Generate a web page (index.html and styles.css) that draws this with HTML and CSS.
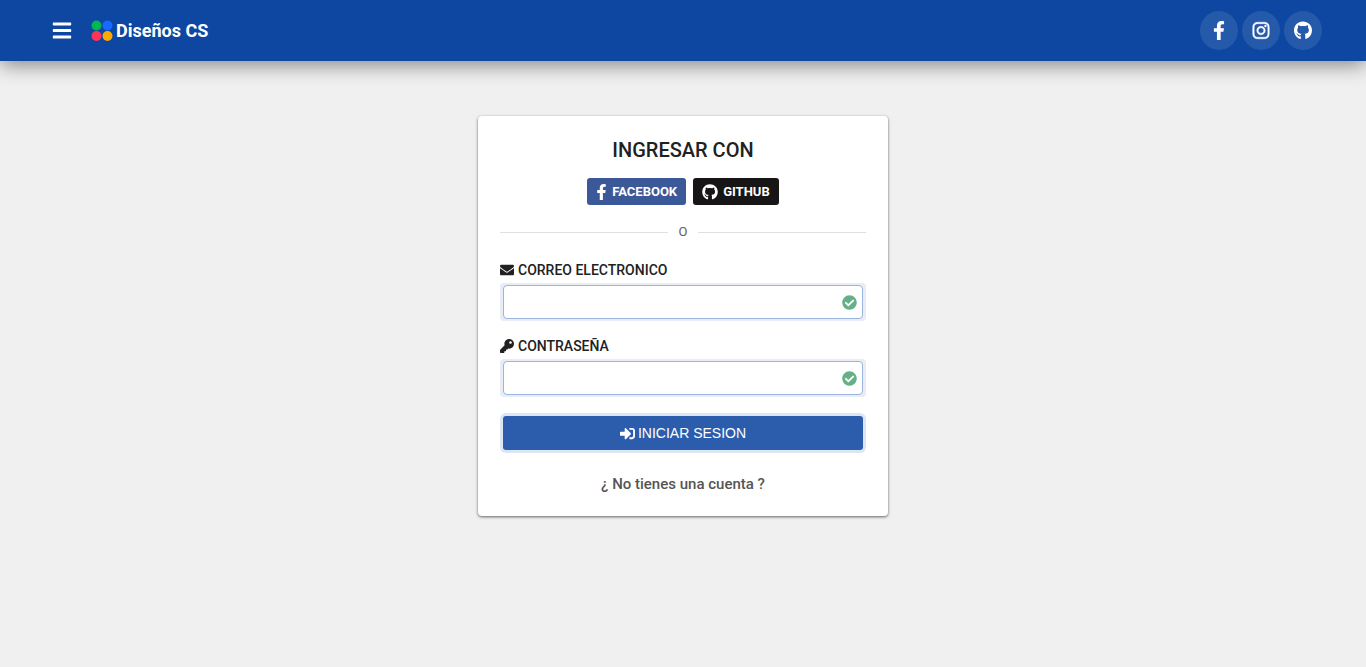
FILE: index.html
```html
<!DOCTYPE html>
<html lang="es">
<head>
<meta charset="utf-8">
<meta name="viewport" content="width=device-width, initial-scale=1">
<title>Diseños CS</title>
<link rel="stylesheet" href="styles.css">
</head>
<body>
<svg class="sprite" aria-hidden="true">
  <symbol id="facebook" viewBox="0 0 320 512"><path d="M279.14 288l14.22-92.66h-88.91v-60.13c0-25.35 12.42-50.06 52.24-50.06h40.42V6.26S260.43 0 225.36 0c-73.22 0-121.08 44.38-121.08 124.72v70.62H22.89V288h81.39v224h100.17V288z"/></symbol>
  <symbol id="github" viewBox="0 0 496 512"><path d="M165.900 397.400c0 2-2.300 3.600-5.200 3.600-3.300.3-5.600-1.300-5.600-3.600 0-2 2.300-3.600 5.200-3.600 3-.3 5.600 1.300 5.600 3.600zM244.800 8C106.100 8 0 113.300 0 252c0 110.900 69.800 205.800 169.500 239.200 12.800 2.300 17.300-5.600 17.300-12.100 0-6.200-.3-40.400-.3-61.400 0 0-70 15-84.700-29.800 0 0-11.400-29.100-27.800-36.600 0 0-22.900-15.700 1.600-15.400 0 0 24.900 2 38.600 25.800 21.900 38.600 58.600 27.500 72.900 20.900 2.300-16 8.800-27.100 16-33.700-55.900-6.200-112.300-14.300-112.300-110.500 0-27.500 7.600-41.300 23.600-58.900-2.600-6.500-11.100-33.300 2.600-67.900 20.900-6.500 69 27 69 27 20-5.600 41.500-8.500 62.800-8.500s42.800 2.900 62.800 8.500c0 0 48.100-33.600 69-27 13.700 34.700 5.200 61.400 2.600 67.900 16 17.700 25.800 31.500 25.800 58.900 0 96.500-58.900 104.200-114.800 110.500 9.200 7.900 17 22.900 17 46.400 0 33.700-.3 75.400-.3 83.600 0 6.500 4.600 14.400 17.300 12.100C428.200 457.800 496 362.900 496 252 496 113.300 383.500 8 244.800 8z"/></symbol>
</svg>

<header class="navbar">
  <div class="navbar-start">
    <button class="menu" type="button" aria-label="Menú">
      <svg class="icon-menu" viewBox="0 0 448 512"><path d="M16 132h416c8.837 0 16-7.163 16-16V76c0-8.837-7.163-16-16-16H16C7.163 60 0 67.163 0 76v40c0 8.837 7.163 16 16 16zm0 160h416c8.837 0 16-7.163 16-16v-40c0-8.837-7.163-16-16-16H16c-8.837 0-16 7.163-16 16v40c0 8.837 7.163 16 16 16zm0 160h416c8.837 0 16-7.163 16-16v-40c0-8.837-7.163-16-16-16H16c-8.837 0-16 7.163-16 16v40c0 8.837 7.163 16 16 16z"/></svg>
    </button>
    <a class="brand" href="#">
      <svg class="brand-logo" viewBox="0 0 22 22"><circle cx="5.500" cy="5.500" r="5" fill="#00b84f"/><circle cx="16.500" cy="5.500" r="5" fill="#1769ff"/><circle cx="5.500" cy="16" r="5" fill="#ff3358"/><circle cx="16.500" cy="16" r="5" fill="#ffa900"/></svg>
      <span>Diseños CS</span>
    </a>
  </div>
  <nav class="social" aria-label="Redes sociales">
    <a class="social-link" href="#" aria-label="Facebook"><svg class="icon-social"><use href="#facebook"/></svg></a>
    <a class="social-link" href="#" aria-label="Instagram"><svg class="icon-social icon-instagram" viewBox="0 0 448 512"><path d="M224.100 141c-63.600 0-114.900 51.300-114.900 114.900s51.300 114.900 114.900 114.900S339 319.500 339 255.900 287.700 141 224.100 141zm0 189.600c-41.100 0-74.700-33.500-74.700-74.700s33.500-74.700 74.700-74.700 74.700 33.500 74.700 74.700-33.600 74.700-74.700 74.700zm146.400-194.300c0 14.900-12 26.800-26.800 26.800-14.900 0-26.800-12-26.800-26.800s12-26.800 26.800-26.800 26.800 12 26.800 26.800zm76.100 27.200c-1.700-35.900-9.900-67.700-36.200-93.900-26.200-26.200-58-34.400-93.900-36.200-37-2.100-147.900-2.100-184.900 0-35.800 1.700-67.600 9.900-93.900 36.100s-34.400 58-36.200 93.900c-2.100 37-2.100 147.900 0 184.900 1.700 35.900 9.900 67.700 36.200 93.900s58 34.400 93.900 36.200c37 2.100 147.900 2.100 184.900 0 35.900-1.700 67.700-9.900 93.900-36.200 26.200-26.200 34.400-58 36.200-93.900 2.100-37 2.100-147.800 0-184.800zM398.800 388c-7.800 19.600-22.900 34.700-42.600 42.600-29.500 11.700-99.500 9-132.100 9s-102.700 2.600-132.100-9c-19.600-7.800-34.700-22.900-42.600-42.600-11.700-29.500-9-99.500-9-132.100s-2.600-102.700 9-132.100c7.800-19.600 22.900-34.700 42.600-42.600 29.500-11.700 99.500-9 132.100-9s102.700-2.600 132.100 9c19.600 7.800 34.700 22.900 42.600 42.600 11.700 29.500 9 99.500 9 132.100s2.700 102.700-9 132.100z"/></svg></a>
    <a class="social-link" href="#" aria-label="GitHub"><svg class="icon-social"><use href="#github"/></svg></a>
  </nav>
</header>

<main class="page">
  <form class="card">
    <h1 class="title">INGRESAR CON</h1>
    <div class="providers">
      <button class="provider facebook" type="button"><svg class="icon-provider narrow"><use href="#facebook"/></svg>FACEBOOK</button>
      <button class="provider github" type="button"><svg class="icon-provider"><use href="#github"/></svg>GITHUB</button>
    </div>
    <div class="divider">O</div>
    <div class="field">
      <label class="label" for="email"><svg class="icon-label" viewBox="0 0 512 512"><path d="M502.300 190.800c3.900-3.100 9.700-.2 9.700 4.700V400c0 26.500-21.500 48-48 48H48c-26.500 0-48-21.500-48-48V195.600c0-5 5.700-7.800 9.700-4.700 22.400 17.400 52.100 39.500 154.100 113.600 21.100 15.400 56.700 47.800 92.200 47.600 35.700.3 72-32.800 92.300-47.600 102-74.100 131.600-96.300 154-113.700zM256 320c23.200.4 56.600-29.200 73.400-41.400 132.700-96.300 142.800-104.700 173.400-128.700 5.800-4.500 9.200-11.500 9.200-18.900v-19c0-26.500-21.500-48-48-48H48c-26.500 0-48 21.500-48 48v19c0 7.400 3.400 14.300 9.200 18.900 30.600 23.900 40.700 32.400 173.400 128.700 16.800 12.200 50.200 41.800 73.400 41.400z"/></svg>CORREO ELECTRONICO</label>
      <div class="control">
        <input class="input" id="email" type="email">
        <svg class="icon-check" viewBox="0 0 512 512"><path d="M504 256c0 136.967-111.033 248-248 248S8 392.967 8 256 119.033 8 256 8s248 111.033 248 248zM227.314 387.314l184-184c6.248-6.248 6.248-16.379 0-22.627l-22.627-22.627c-6.248-6.249-16.379-6.249-22.628 0L216 308.118l-70.059-70.059c-6.248-6.248-16.379-6.248-22.628 0l-22.627 22.627c-6.248 6.248-6.248 16.379 0 22.627l104 104c6.249 6.249 16.379 6.249 22.628.001z"/></svg>
      </div>
    </div>
    <div class="field">
      <label class="label" for="password"><svg class="icon-label" viewBox="0 0 512 512"><path d="M512 176.001C512 273.203 433.202 352 336 352c-11.220 0-22.190-1.062-32.827-3.069l-24.012 27.014A23.999 23.999 0 0 1 261.223 384H224v40c0 13.255-10.745 24-24 24h-40v40c0 13.255-10.745 24-24 24H24c-13.255 0-24-10.745-24-24v-78.059c0-6.365 2.529-12.470 7.029-16.971l161.802-161.802C163.108 213.814 160 195.271 160 176 160 78.798 238.797.001 335.999 0 433.488-.001 512 78.511 512 176.001zM336 128c0 26.510 21.490 48 48 48s48-21.490 48-48-21.490-48-48-48-48 21.490-48 48z"/></svg>CONTRASEÑA</label>
      <div class="control">
        <input class="input" id="password" type="password">
        <svg class="icon-check" viewBox="0 0 512 512"><path d="M504 256c0 136.967-111.033 248-248 248S8 392.967 8 256 119.033 8 256 8s248 111.033 248 248zM227.314 387.314l184-184c6.248-6.248 6.248-16.379 0-22.627l-22.627-22.627c-6.248-6.249-16.379-6.249-22.628 0L216 308.118l-70.059-70.059c-6.248-6.248-16.379-6.248-22.628 0l-22.627 22.627c-6.248 6.248-6.248 16.379 0 22.627l104 104c6.249 6.249 16.379 6.249 22.628.001z"/></svg>
      </div>
    </div>
    <button class="submit" type="submit"><svg class="icon-submit" viewBox="0 0 512 512"><path d="M416 448h-84c-6.600 0-12-5.400-12-12v-40c0-6.600 5.400-12 12-12h84c17.700 0 32-14.300 32-32V160c0-17.700-14.300-32-32-32h-84c-6.600 0-12-5.400-12-12V76c0-6.600 5.400-12 12-12h84c53 0 96 43 96 96v192c0 53-43 96-96 96zm-47-201L201 79c-15-15-41-4.500-41 17v96H24c-13.300 0-24 10.700-24 24v96c0 13.300 10.700 24 24 24h136v96c0 21.500 26 32 41 17l168-168c9.300-9.400 9.300-24.600 0-34z"/></svg>INICIAR SESION</button>
    <a class="register" href="#">¿ No tienes una cuenta ?</a>
  </form>
</main>
</body>
</html>
```
FILE: styles.css
```css
* {
  box-sizing: border-box;
}

body {
  margin: 0;
  background: #f0f0f0;
  color: #212121;
  font-family: Roboto, "Liberation Sans", sans-serif;
}

svg {
  fill: currentColor;
  flex-shrink: 0;
}

button {
  border: 0;
  cursor: pointer;
}

a {
  color: inherit;
  text-decoration: none;
}

.sprite {
  display: none;
}

.navbar {
  display: flex;
  align-items: center;
  justify-content: space-between;
  padding: 11px 44px;
  background: #0d47a1;
  color: #fff;
  box-shadow: 0 4px 20px rgba(0, 0, 0, 0.45);
}

.navbar-start {
  display: flex;
  align-items: center;
  gap: 11px;
}

.menu {
  display: flex;
  padding: 8px;
  background: none;
  color: inherit;
}

.icon-menu {
  width: 20px;
  height: 21px;
}

.brand {
  display: flex;
  align-items: center;
  gap: 3px;
  font-size: 18px;
  font-weight: 700;
}

.brand-logo {
  width: 22px;
  height: 22px;
}

.social {
  display: flex;
  gap: 4px;
}

.social-link {
  display: flex;
  align-items: center;
  justify-content: center;
  width: 38px;
  height: 39px;
  border-radius: 50%;
  background: rgba(255, 255, 255, 0.1);
}

.icon-social {
  width: 18px;
  height: 19px;
}

.icon-instagram {
  stroke: currentColor;
  stroke-width: 12px;
}

.page {
  display: flex;
  justify-content: center;
  padding: 55px 16px;
}

.card {
  display: flex;
  flex-direction: column;
  width: 100%;
  max-width: 410px;
  padding: 22px;
  border-radius: 4px;
  background: #fff;
  box-shadow: 0 1px 3px rgba(0, 0, 0, 0.6);
}

.title {
  margin: 0 0 16px;
  font-size: 20px;
  font-weight: 500;
  line-height: 24px;
  text-align: center;
}

.providers {
  display: flex;
  justify-content: center;
  gap: 7px;
}

.provider {
  display: flex;
  align-items: center;
  gap: 5px;
  height: 27px;
  padding: 0 9px;
  border-radius: 3px;
  color: #fff;
  font: 700 13px Roboto, sans-serif;
}

.facebook {
  background: #3b5998;
}

.github {
  background: #171515;
}

.icon-provider {
  width: 16px;
  height: 16px;
}

.narrow {
  width: 11px;
}

.divider {
  display: flex;
  align-items: center;
  gap: 11px;
  margin: 18px 0 20px;
  color: #616161;
  font-size: 13px;
  line-height: 18px;
}

.divider::before,
.divider::after {
  flex: 1;
  height: 1px;
  background: #e0e0e0;
  content: "";
}

.field {
  margin-bottom: 16px;
}

.label {
  display: flex;
  align-items: center;
  gap: 4px;
  margin-bottom: 4px;
  font-size: 14px;
  font-weight: 500;
  line-height: 18px;
}

.icon-label {
  width: 14px;
  height: 14px;
}

.control {
  display: flex;
  align-items: center;
  padding: 0 3px;
  height: 38px;
  border-radius: 4px;
  background: #e7ecf5;
}

.input {
  flex: 1;
  min-width: 0;
  height: 34px;
  padding: 0 28px 0 8px;
  border: 1px solid #9bb5de;
  border-radius: 4px;
  background: #fff;
  font: 15px Roboto, sans-serif;
  outline: 0;
}

.icon-check {
  width: 15px;
  height: 15px;
  margin-left: -21px;
  margin-right: 6px;
  color: #66b088;
}

.submit {
  display: flex;
  align-items: center;
  justify-content: center;
  gap: 3px;
  height: 34px;
  margin: 3px 3px 24px;
  border-radius: 3px;
  background: #2c5dad;
  box-shadow: 0 0 0 3px #dce5f3;
  color: #fff;
  font: 14px "Liberation Sans", Arial, sans-serif;
}

.icon-submit {
  width: 15px;
  height: 15px;
}

.register {
  align-self: center;
  color: #555;
  font-size: 15px;
  font-weight: 500;
  line-height: 20px;
}
```
